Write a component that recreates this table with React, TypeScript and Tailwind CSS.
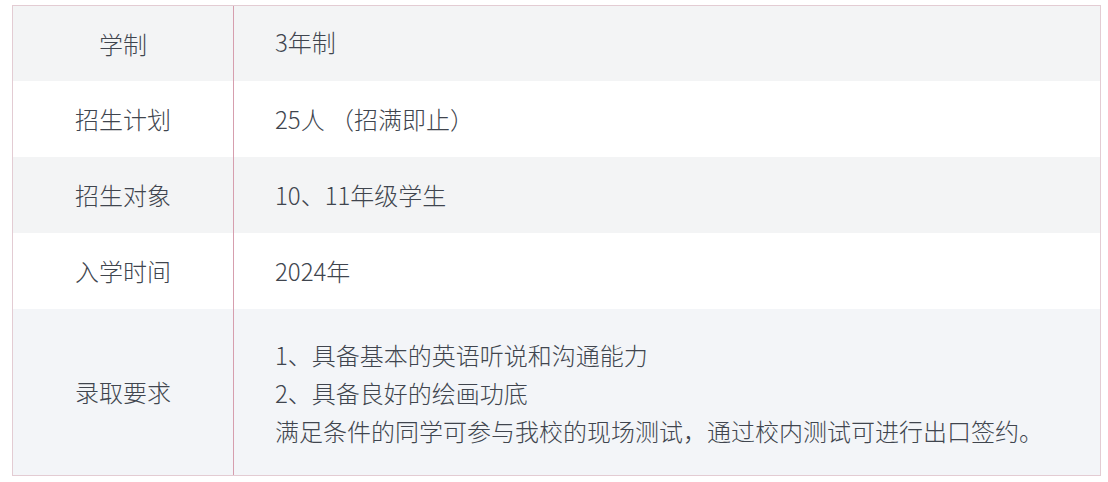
const rows = [
  { label: "学制", value: ["3年制"], grey: true },
  { label: "招生计划", value: ["25人 （招满即止）"], grey: false },
  { label: "招生对象", value: ["10、11年级学生"], grey: true },
  { label: "入学时间", value: ["2024年"], grey: false },
  {
    label: "录取要求",
    value: [
      "1、具备基本的英语听说和沟通能力",
      "2、具备良好的绘画功底",
      "满足条件的同学可参与我校的现场测试，通过校内测试可进行出口签约。",
    ],
    grey: true,
  },
];

export default function App() {
  return (
    <div
      className="bg-white w-[1108px] h-[482px] pt-[5px] pl-[12px]"
      style={{ fontFamily: '"Noto Sans CJK SC", "Noto Sans", sans-serif' }}
    >
      <div className="w-[1089px] border border-[#e3ccd3] text-[24px] leading-[38px] font-light text-[#40454e]">
        {rows.map((row, i) => (
          <div
            key={row.label}
            className={`flex ${row.grey ? (i === 4 ? "bg-[#f3f5f8]" : "bg-[#f3f4f5]") : "bg-white"}`}
          >
            <div className="w-[221px] shrink-0 border-r border-[#d69eae] flex items-center justify-center">
              {row.label}
            </div>
            <div
              className={`flex-1 pl-[41px] ${
                i === 4 ? "pt-[27px] pb-[25px]" : i === 0 ? "pt-[17px] pb-[20px]" : "pt-[19px] pb-[19px]"
              }`}
            >
              {row.value.map((line) => (
                <div key={line}>{line}</div>
              ))}
            </div>
          </div>
        ))}
      </div>
    </div>
  );
}
